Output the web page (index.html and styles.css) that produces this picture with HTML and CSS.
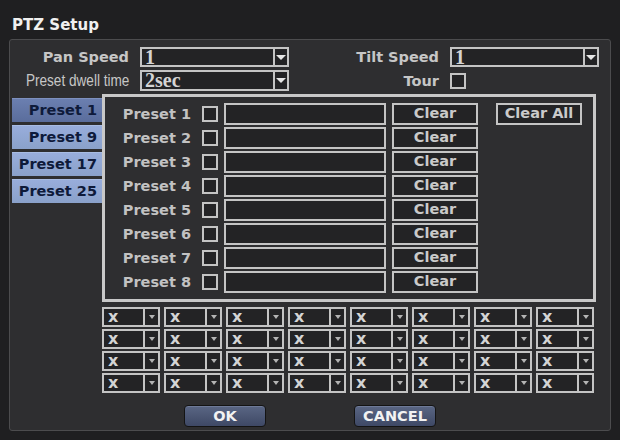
FILE: index.html
```html
<!DOCTYPE html>
<html>
<head>
<meta charset="utf-8">
<link rel="stylesheet" href="styles.css">
</head>
<body>
<div class="title">PTZ Setup</div>
<div class="panel">
  <div class="row">
    <span class="lbl lbl-a">Pan Speed</span>
    <div class="sel"><span class="val">1</span><span class="arr"></span></div>
    <span class="lbl lbl-b">Tilt Speed</span>
    <div class="sel"><span class="val">1</span><span class="arr"></span></div>
  </div>
  <div class="row row2">
    <span class="lbl lbl-a"><span class="narrow">Preset dwell time</span></span>
    <div class="sel"><span class="val">2sec</span><span class="arr"></span></div>
    <span class="lbl lbl-b">Tour</span>
    <span class="chk"></span>
  </div>
  <div class="main">
    <div class="tabs">
      <div class="tab active">Preset 1</div>
      <div class="tab">Preset 9</div>
      <div class="tab">Preset 17</div>
      <div class="tab">Preset 25</div>
    </div>
    <div class="right">
      <div class="presets">
        <div class="prow"><span class="plbl">Preset 1</span><span class="chk"></span><span class="inp"></span><span class="btn">Clear</span><span class="btn all">Clear All</span></div>
        <div class="prow"><span class="plbl">Preset 2</span><span class="chk"></span><span class="inp"></span><span class="btn">Clear</span></div>
        <div class="prow"><span class="plbl">Preset 3</span><span class="chk"></span><span class="inp"></span><span class="btn">Clear</span></div>
        <div class="prow"><span class="plbl">Preset 4</span><span class="chk"></span><span class="inp"></span><span class="btn">Clear</span></div>
        <div class="prow"><span class="plbl">Preset 5</span><span class="chk"></span><span class="inp"></span><span class="btn">Clear</span></div>
        <div class="prow"><span class="plbl">Preset 6</span><span class="chk"></span><span class="inp"></span><span class="btn">Clear</span></div>
        <div class="prow"><span class="plbl">Preset 7</span><span class="chk"></span><span class="inp"></span><span class="btn">Clear</span></div>
        <div class="prow"><span class="plbl">Preset 8</span><span class="chk"></span><span class="inp"></span><span class="btn">Clear</span></div>
      </div>
      <div class="grid">
        <div class="cell"><span class="cx">x</span><span class="carr"></span></div>
        <div class="cell"><span class="cx">x</span><span class="carr"></span></div>
        <div class="cell"><span class="cx">x</span><span class="carr"></span></div>
        <div class="cell"><span class="cx">x</span><span class="carr"></span></div>
        <div class="cell"><span class="cx">x</span><span class="carr"></span></div>
        <div class="cell"><span class="cx">x</span><span class="carr"></span></div>
        <div class="cell"><span class="cx">x</span><span class="carr"></span></div>
        <div class="cell"><span class="cx">x</span><span class="carr"></span></div>
        <div class="cell"><span class="cx">x</span><span class="carr"></span></div>
        <div class="cell"><span class="cx">x</span><span class="carr"></span></div>
        <div class="cell"><span class="cx">x</span><span class="carr"></span></div>
        <div class="cell"><span class="cx">x</span><span class="carr"></span></div>
        <div class="cell"><span class="cx">x</span><span class="carr"></span></div>
        <div class="cell"><span class="cx">x</span><span class="carr"></span></div>
        <div class="cell"><span class="cx">x</span><span class="carr"></span></div>
        <div class="cell"><span class="cx">x</span><span class="carr"></span></div>
        <div class="cell"><span class="cx">x</span><span class="carr"></span></div>
        <div class="cell"><span class="cx">x</span><span class="carr"></span></div>
        <div class="cell"><span class="cx">x</span><span class="carr"></span></div>
        <div class="cell"><span class="cx">x</span><span class="carr"></span></div>
        <div class="cell"><span class="cx">x</span><span class="carr"></span></div>
        <div class="cell"><span class="cx">x</span><span class="carr"></span></div>
        <div class="cell"><span class="cx">x</span><span class="carr"></span></div>
        <div class="cell"><span class="cx">x</span><span class="carr"></span></div>
        <div class="cell"><span class="cx">x</span><span class="carr"></span></div>
        <div class="cell"><span class="cx">x</span><span class="carr"></span></div>
        <div class="cell"><span class="cx">x</span><span class="carr"></span></div>
        <div class="cell"><span class="cx">x</span><span class="carr"></span></div>
        <div class="cell"><span class="cx">x</span><span class="carr"></span></div>
        <div class="cell"><span class="cx">x</span><span class="carr"></span></div>
        <div class="cell"><span class="cx">x</span><span class="carr"></span></div>
        <div class="cell"><span class="cx">x</span><span class="carr"></span></div>
      </div>
    </div>
  </div>
  <div class="buttons">
    <span class="okbtn">OK</span>
    <span class="okbtn">CANCEL</span>
  </div>
</div>
</body>
</html>
```
FILE: styles.css
```css
* { box-sizing: border-box; }
html, body {
  margin: 0;
  width: 620px;
  height: 440px;
  background: #1f1f21;
  overflow: hidden;
  font-family: "DejaVu Sans", sans-serif;
}
.title {
  height: 39px;
  padding: 16px 0 0 12px;
  font-weight: bold;
  font-size: 15px;
  line-height: 18px;
  color: #f0f0f0;
}
.panel {
  margin-left: 9px;
  width: 602px;
  height: 392px;
  border: 1px solid #4c4c4e;
  border-radius: 3px;
  background: #2e2e30;
  padding-top: 7px;
}
.row {
  display: flex;
  align-items: center;
  height: 20px;
}
.row2 { margin-top: 3px; height: 21px; }
.lbl {
  display: flex;
  justify-content: flex-end;
  align-items: center;
  padding-right: 11px;
  font-weight: bold;
  font-size: 14.5px;
  color: #c6c6c6;
  white-space: nowrap;
  flex: none;
}
.lbl-a { width: 130px; }
.lbl-b { width: 161px; }
.narrow {
  display: inline-block;
  flex: none;
  font-family: "Liberation Sans", sans-serif;
  font-weight: normal;
  font-size: 17px;
  transform: scaleX(0.8);
  transform-origin: right center;
}
.sel {
  width: 149px;
  height: 100%;
  display: flex;
  border: 2px solid #c4c4c4;
  background: #232325;
}
.val {
  flex: 1;
  padding-left: 3px;
  font-family: "Liberation Serif", serif;
  font-weight: bold;
  font-size: 20px;
  line-height: 17px;
  color: #d4d4d4;
}
.arr {
  width: 14px;
  border-left: 2px solid #c4c4c4;
  display: flex;
  align-items: center;
  justify-content: center;
}
.arr::after {
  content: "";
  border-left: 5px solid transparent;
  border-right: 5px solid transparent;
  border-top: 5px solid #e6e6e6;
}
.chk {
  width: 16px;
  height: 16px;
  border: 2px solid #c4c4c4;
  background: #232325;
  flex: none;
}
.main {
  margin-top: 3px;
  padding-left: 2px;
  display: grid;
  grid-template-columns: 90px 494px;
}
.tabs { padding-top: 4px; }
.tab {
  height: 24px;
  margin-bottom: 3px;
  padding-right: 5px;
  text-align: right;
  font-weight: bold;
  font-size: 14.5px;
  line-height: 22px;
  color: #0e1a3a;
  background: linear-gradient(#98addb, #8aa1ca);
  border-top: 1px solid #a8bce3;
}
.tab.active {
  background: linear-gradient(#6b7fb0, #5a6d9c);
  border-top: 1px solid #7d90bf;
}
.presets {
  height: 208px;
  border: 3px solid #c8c8c8;
  background: #2e2e30;
  padding-top: 6px;
}
.prow {
  display: flex;
  align-items: center;
  height: 22px;
  margin-bottom: 2px;
}
.plbl {
  width: 86px;
  margin-right: 11px;
  text-align: right;
  font-weight: bold;
  font-size: 14.5px;
  line-height: 20px;
  color: #c2c2c2;
  white-space: nowrap;
}
.inp {
  width: 162px;
  height: 22px;
  margin-left: 6px;
  border: 2px solid #c4c4c4;
  background: #232325;
}
.btn {
  width: 86px;
  height: 22px;
  margin-left: 6px;
  border: 2px solid #c4c4c4;
  background: #232325;
  text-align: center;
  font-weight: bold;
  font-size: 14.5px;
  line-height: 17px;
  color: #cacaca;
  white-space: nowrap;
}
.btn.all { margin-left: 18px; }
.grid {
  margin-top: 5px;
  display: grid;
  grid-template-columns: repeat(8, 58px);
  column-gap: 4px;
  row-gap: 2px;
}
.cell {
  height: 20px;
  display: flex;
  border: 2px solid #c4c4c4;
  background: #232325;
}
.cx {
  flex: 1;
  padding-left: 4px;
  font-weight: bold;
  font-size: 16px;
  line-height: 16px;
  color: #d4d4d4;
}
.carr {
  width: 15px;
  border-left: 2px solid #c4c4c4;
  display: flex;
  align-items: center;
  justify-content: center;
}
.carr::after {
  content: "";
  border-left: 3px solid transparent;
  border-right: 3px solid transparent;
  border-top: 4px solid #b4b4b4;
}
.buttons {
  margin-top: 12px;
  display: flex;
  justify-content: center;
  gap: 88px;
}
.okbtn {
  width: 82px;
  height: 22px;
  border: 1px solid #141414;
  border-radius: 4px;
  background: linear-gradient(#5a6684, #3e4865);
  box-shadow: inset 0 1px 0 #6e7a98;
  text-align: center;
  font-weight: bold;
  font-size: 14.5px;
  line-height: 20px;
  color: #f2f2f2;
}
```
